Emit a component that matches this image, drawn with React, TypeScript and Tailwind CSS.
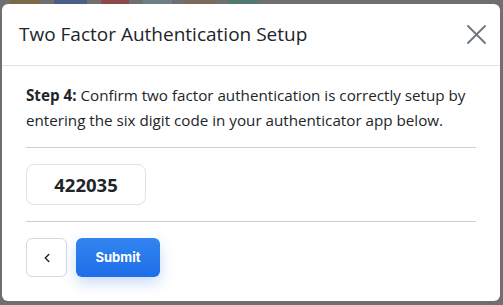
import { ChevronLeft } from 'lucide-react'

export default function App() {
  return (
    <div className="relative w-[503px] h-[305px] overflow-hidden bg-[#6f6f6f] font-['Open_Sans',sans-serif]">
      {/* Dimmed page content behind the modal */}
      <div className="absolute top-0 left-0 flex gap-[14px] pl-[10px]">
        <div className="w-[30px] h-[6px] bg-[#7a6a45]" />
        <div className="w-[33px] h-[6px] bg-[#4a5f86]" />
        <div className="w-[28px] h-[6px] bg-[#8a4a4a]" />
        <div className="w-[29px] h-[6px] bg-[#6f7f86]" />
        <div className="w-[29px] h-[6px] bg-[#7a6a5a]" />
        <div className="w-[29px] h-[6px] bg-[#4f7a72]" />
      </div>

      {/* Modal */}
      <div className="absolute left-[2px] top-[4px] w-[498px] h-[297px] bg-white rounded-[6px] flex flex-col">
        {/* Header */}
        <div className="flex items-center justify-between h-[62px] pl-[17px] pr-[14px] border-b border-[#dee2e6]">
          <h2 className="text-[19px] text-[#212529] leading-none">Two Factor Authentication Setup</h2>
          <svg width="19" height="19" viewBox="0 0 19 19" className="text-[#6c757d]">
            <path d="M1 1L18 18M18 1L1 18" stroke="currentColor" strokeWidth="1.8" strokeLinecap="round" />
          </svg>
        </div>

        {/* Body */}
        <div className="px-[24px] pt-[17px]">
          <p className="text-[15.2px] leading-[25px] text-[#212529]">
            <span className="font-bold">Step 4:</span> Confirm two factor authentication is correctly setup by entering the six digit code in your authenticator app below.
          </p>
          <div className="mt-[14px] border-t border-[#cfcfcf]" />

          <div className="mt-[16px] w-[120px] h-[41px] rounded-[8px] border border-[#dee2e6] flex items-center justify-center">
            <span className="text-[18.5px] font-bold text-[#212529]">422035</span>
          </div>

          <div className="mt-[16px] border-t border-[#cfcfcf]" />

          <div className="mt-[16px] flex gap-[9px]">
            <button className="w-[41px] h-[39px] rounded-[6px] border border-[#d6d8db] bg-white flex items-center justify-center">
              <ChevronLeft className="w-[14px] h-[14px] text-[#212529]" strokeWidth={2.5} />
            </button>
            <button className="w-[84px] h-[39px] rounded-[6px] bg-gradient-to-b from-[#3384f0] to-[#1d6ee8] text-white text-[13px] font-bold shadow-[0_6px_14px_rgba(37,117,240,0.25)] font-['Inter',sans-serif]">
              Submit
            </button>
          </div>
        </div>
      </div>
    </div>
  )
}
